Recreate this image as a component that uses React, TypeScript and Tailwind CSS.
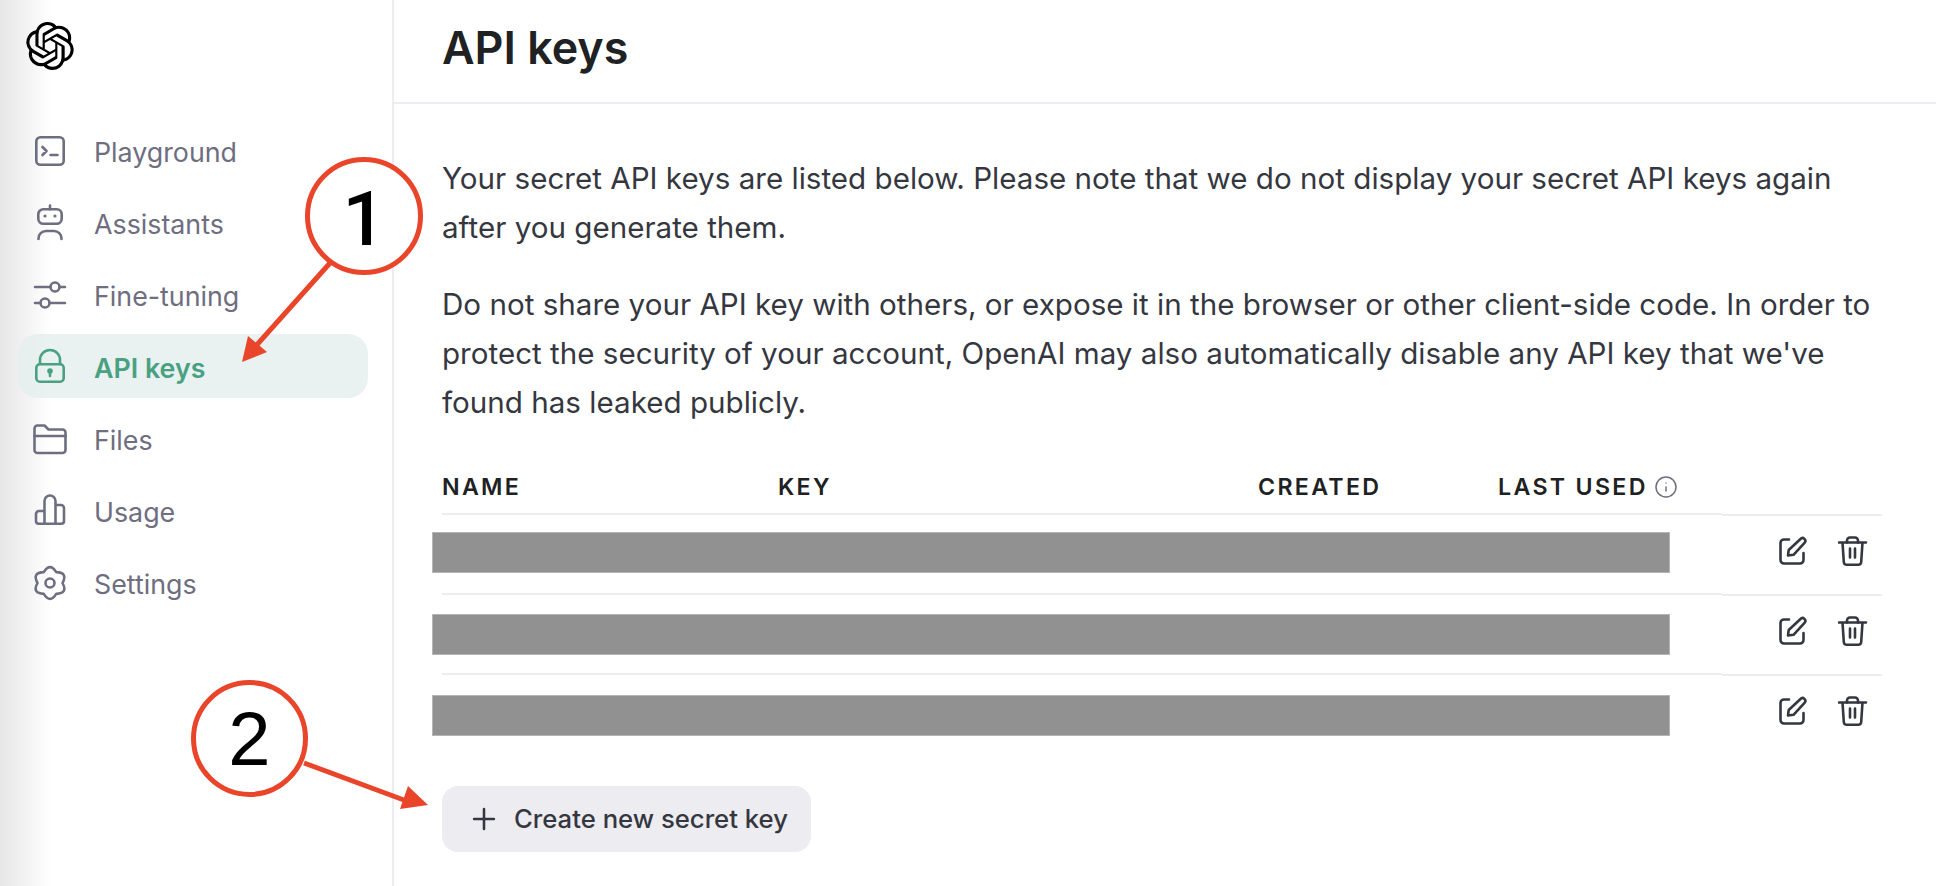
import { Info, Plus } from "lucide-react";
import { SiOpenai } from "react-icons/si";

const navItems = [
  {
    label: "Playground",
    icon: (
      <>
        <rect x="4.3" y="2.3" width="27.4" height="27.4" rx="4" />
        <path d="M10.5 12l4 4-4 4M18.5 20h7" />
      </>
    ),
  },
  {
    label: "Assistants",
    icon: (
      <>
        <rect x="6.3" y="2.3" width="23.4" height="14.4" rx="5" />
        <path d="M18 2.3V-1.5M6.5 32v-.5a7.5 7.5 0 0 1 7.5-7.5h8a7.5 7.5 0 0 1 7.5 7.5v.5" />
        <circle cx="13" cy="9" r="1.6" fill="currentColor" stroke="none" />
        <circle cx="23" cy="9" r="1.6" fill="currentColor" stroke="none" />
      </>
    ),
  },
  {
    label: "Fine-tuning",
    icon: (
      <>
        <path d="M3 8h15.500M27.500 8H33M3 24h5.500M17.500 24H33" />
        <circle cx="23" cy="8" r="4.500" />
        <circle cx="13" cy="24" r="4.500" />
      </>
    ),
  },
  {
    label: "API keys",
    active: true,
    icon: (
      <>
        <rect x="4.3" y="13.300" width="27.400" height="17.400" rx="3.500" />
        <path d="M8 13v-4a10 10 0 0 1 20 0v4" />
        <circle cx="18" cy="20" r="2.800" fill="currentColor" stroke="none" />
        <path d="M18 20v5" />
      </>
    ),
  },
  {
    label: "Files",
    icon: (
      <>
        <path d="M2.500 26V5.500a3 3 0 0 1 3-3h7l4 4h14a3 3 0 0 1 3 3V27a3 3 0 0 1-3 3h-25a3 3 0 0 1-3-3z" />
        <path d="M2.500 13h31" />
      </>
    ),
  },
  {
    label: "Usage",
    icon: (
      <path d="M12.500 28.700V6a5.500 5.500 0 0 1 11 0v22.700M12.500 16H7a3 3 0 0 0-3 3v7a2.700 2.700 0 0 0 2.700 2.700h22.600A2.700 2.700 0 0 0 32 26V13a3 3 0 0 0-3-3h-5.500" />
    ),
  },
  {
    label: "Settings",
    icon: (
      <>
        <path d="M11.750 5.170Q18 -5 24.250 5.170Q36.190 5.500 30.500 16Q36.190 26.500 24.250 26.830Q18 37 11.750 26.830Q-.19 26.500 5.500 16Q-.19 5.500 11.750 5.170Z" />
        <circle cx="18" cy="16" r="4.500" />
      </>
    ),
  },
];

const columns = [
  { label: "NAME", width: "w-[336px]" },
  { label: "KEY", width: "w-[480px]" },
  { label: "CREATED", width: "w-[240px]" },
];

// the redaction bars don't sit at the same offset in each row
const rows = ["pt-[17px]", "pt-[19px]", "pt-[20px]"];

const EditIcon = () => (
  <svg width="30" height="30" viewBox="0 0 30 30" fill="none" stroke="#353740" strokeWidth="2.600" strokeLinecap="round" strokeLinejoin="round">
    <path d="M11 4.500H6a3.500 3.500 0 0 0-3.500 3.500v17a3.500 3.500 0 0 0 3.500 3.500h16a3.500 3.500 0 0 0 3.500-3.500v-7" />
    <path d="M10 20.500l.7-5.500L22.500 4a2.700 2.700 0 0 1 4 3.800L15.500 19.800z" />
  </svg>
);

const TrashIcon = () => (
  <svg width="30" height="32" viewBox="0 0 30 32" fill="none" stroke="#353740" strokeWidth="2.600" strokeLinecap="round" strokeLinejoin="round">
    <path d="M1 7.500h27M4.500 7.500l1.300 19.500a3 3 0 0 0 3 2.800h11.400a3 3 0 0 0 3-2.800l1.300-19.500" />
    <path d="M9 7.500V5.500a3 3 0 0 1 3-3h5a3 3 0 0 1 3 3v2M12 13.500v9M17 13.500v9" />
  </svg>
);

function Callout({ className, children }: { className: string; children: React.ReactNode }) {
  return (
    <div
      className={`absolute flex items-center justify-center rounded-full border-[5px] border-[#e8452a] bg-white text-[76px] leading-none text-black ${className}`}
    >
      {children}
    </div>
  );
}

export default function App() {
  return (
    <div className="relative flex h-[886px] w-[1936px] overflow-hidden bg-white font-['Inter',sans-serif]">
      <aside className="h-full w-[394px] shrink-0 border-r-2 border-[#ececf1] bg-gradient-to-r from-[#e6e6e6] to-white to-[13%]">
        <div className="pl-[26px] pt-[22px]">
          <SiOpenai size={48} className="text-black" />
        </div>
        <nav className="mt-[48px] flex flex-col gap-2 pl-[18px] pr-[24px]">
          {navItems.map((item) => (
            <div
              key={item.label}
              className={`flex h-[64px] items-center gap-[26px] rounded-[20px] pl-[14px] pt-[5px] text-[26.8px] ${
                item.active
                  ? "bg-[#e3efee]/80 font-semibold text-[#4aa181]"
                  : "text-[#6e6e80]"
              }`}
            >
              <svg
                width="36"
                height="36"
                viewBox="0 0 36 36"
                fill="none"
                stroke="currentColor"
                strokeWidth="2.600"
                strokeLinecap="round"
                strokeLinejoin="round"
                className="shrink-0 overflow-visible"
              >
                {item.icon}
              </svg>
              {item.label}
            </div>
          ))}
        </nav>
      </aside>

      <main className="min-w-0 flex-1">
        <header className="flex h-[104px] items-center border-b-2 border-[#ececf1] pb-[6px] pl-[48px]">
          <h1 className="text-[44.8px] font-semibold leading-none text-[#202123]">API keys</h1>
        </header>

        <div className="pl-[48px] pt-[50px]">
          <div className="flex w-[1440px] flex-col gap-[28px] text-[29.6px] leading-[49px] text-[#353740]">
            <p>
              Your secret API keys are listed below. Please note that we do not display your secret API keys again
              <br />
              after you generate them.
            </p>
            <p>
              Do not share your API key with others, or expose it in the browser or other client-side code. In order to
              <br />
              protect the security of your account, OpenAI may also automatically disable any API key that we've
              <br />
              found has leaked publicly.
            </p>
          </div>

          <div className="mt-[34px] w-[1440px]">
            <div className="flex h-[52px] items-center text-[23.2px] font-semibold tracking-[0.1em] text-[#202123]">
              {columns.map((col) => (
                <div key={col.label} className={col.width}>
                  {col.label}
                </div>
              ))}
              <div className="flex items-center gap-[6px]">
                LAST USED
                <Info size={24} strokeWidth={1.500} className="text-[#6e6e80]" />
              </div>
            </div>

            {rows.map((barOffset) => (
              <div key={barOffset} className="flex h-[80px]">
                <div className={`w-[1280px] border-t-2 border-[#ececf1] ${barOffset}`}>
                  <div className="-ml-[10px] h-[41px] w-[1238px] border border-[#b5b5b5] bg-[#919191]" />
                </div>
                <div className="mt-px flex h-[79px] w-[160px] items-start justify-end gap-[30px] border-t-2 border-[#ececf1] pr-[14px] pt-[19px]">
                  <EditIcon />
                  <TrashIcon />
                </div>
              </div>
            ))}
          </div>

          <button className="mt-[33px] flex h-[66px] w-[369px] items-center gap-[13px] rounded-[16px] bg-[#ececf1] pl-[25px] text-[25.7px] font-medium text-[#353740]">
            <Plus size={34} strokeWidth={1.800} />
            Create new secret key
          </button>
        </div>
      </main>

      <svg className="pointer-events-none absolute inset-0" width="1936" height="886" fill="none">
        <path d="M330 263L254 348" stroke="#e8452a" strokeWidth="5" />
        <path d="M242 362L248 336L267 352Z" fill="#e8452a" />
        <path d="M304 763L412 803" stroke="#e8452a" strokeWidth="5" />
        <path d="M428 805L408 786L400 809Z" fill="#e8452a" />
      </svg>
      <Callout className="left-[305px] top-[157px] h-[118px] w-[118px] pt-[6px] font-['Roboto',sans-serif] font-medium">1</Callout>
      <Callout className="left-[191px] top-[680px] h-[117px] w-[117px] font-['Liberation_Sans',sans-serif]">2</Callout>
    </div>
  );
}
